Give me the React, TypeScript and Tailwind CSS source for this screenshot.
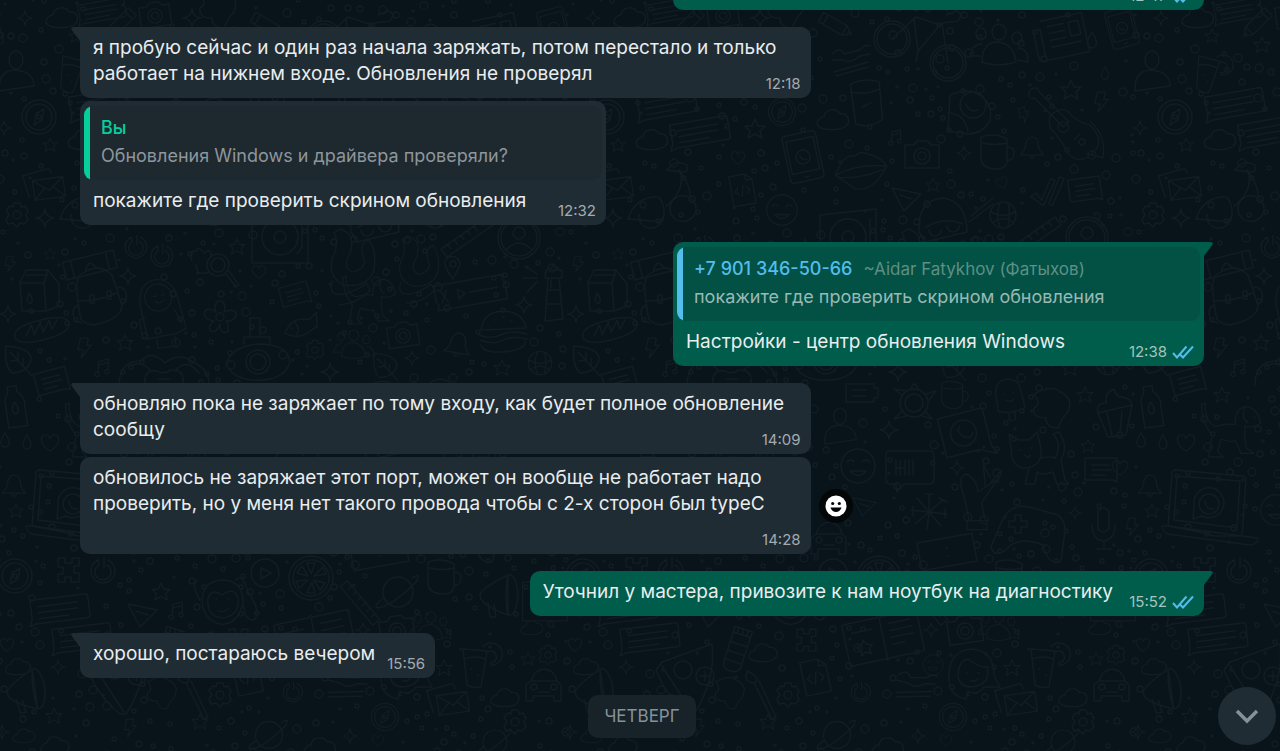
import type { ReactNode } from "react";
import clsx from "clsx";

type Doodle = [kind: string, x: number, y: number, scale?: number, rotate?: number];

const TILE = 568;

/* Shapes are drawn around 0,0 and placed by the doodles list below */
const shapes: Record<string, ReactNode> = {
  star: <path d="M0-10 3-3 10-3 5 2 7 9 0 5-7 9-5 2-10-3-3-3Z" />,
  spark: <path d="M0-9Q1-1 9 0Q1 1 0 9Q-1 1-9 0Q-1-1 0-9Z" />,
  heart: <path d="M0 9C-14 0-10-9-5-9C-2-9 0-6 0-5C0-6 2-9 5-9C10-9 14 0 0 9Z" />,
  bolt: <path d="M-4-11H5L3-3H8L-3 11-1 2H-7Z" />,
  drop: <path d="M0-8Q9 6 0 8Q-9 6 0-8Z" />,
  music: <path d="M-4 6V-6L7-9V3M-4-2 7-5M-7 6a2.500 2.500 0 1 0 3 0ZM4 3a2.500 2.500 0 1 0 3 0Z" />,
  cloud: <path d="M-12 8C-20 5-14-3-9-3C-8-12 4-12 7-6C15-8 18 2 13 6C8 11-8 10-12 8Z" />,
  bell: <path d="M-13 9Q-7 4-7-4Q-5-11 0-11Q6-11 7-4Q7 4 13 9ZM-3 10Q0 15 3 10" />,
  flower: (
    <>
      <circle r="4" />
      <path d="M-4-5C-9-20 9-20 4-5C18-12 22 4 6 4C14 18-1 20 0 7C-3 20-18 14-6 4C-22 2-16-14-4-5Z" />
    </>
  ),
  gear: (
    <>
      <circle r="4" />
      <path d="M-3-12H3L4-8 8-9 11-4 9 0 11 5 7 9 3 8 0 12-4 8-9 9-11 4-8 0-11-5-7-9-4-8Z" />
    </>
  ),
  compass: (
    <>
      <circle r="17" />
      <circle r="13" />
      <path d="M5-8 3 3-5 8-3-3Z" />
      <circle r="2" />
    </>
  ),
  globe: <path d="M-13 0a13 13 0 1 0 26 0a13 13 0 1 0-26 0ZM-12-3Q0 4 12-3M-3-12Q-8 0-3 12M5-12Q8 0 5 12M-10 7Q0 0 10 7" />,
  play: <path d="M-14 0a14 14 0 1 0 28 0a14 14 0 1 0-28 0ZM-4-5 6 0-4 6Z" />,
  emoji: <path d="M-17 0a17 17 0 1 0 34 0a17 17 0 1 0-34 0ZM-11-4Q-7-8-4-4M4-4Q8-8 11-4M-8 5Q0 14 8 5Z" />,
  citrus: <path d="M-22 0a22 22 0 1 0 44 0a22 22 0 1 0-44 0ZM-18 0a18 18 0 1 0 36 0a18 18 0 1 0-36 0ZM3-2 12-11 15-4ZM3 2 14 5 9 12ZM1 4 4 15-4 15ZM-3 2-12 10-15 3ZM-3-2-14-5-9-12ZM0-4-4-15H4Z" />,
  bike: <path d="M-46 0a18 18 0 1 0 36 0a18 18 0 1 0-36 0ZM-43 0a15 15 0 1 0 30 0a15 15 0 1 0-30 0ZM10 24a18 18 0 1 0 36 0a18 18 0 1 0-36 0ZM13 24a15 15 0 1 0 30 0a15 15 0 1 0-30 0ZM-28 0-4-22 20-14-2 12-6-20M28 24 22-16 38-18Q44-26 36-28L26-24M-2 12-4 22" />,
  people: <path d="M-16 12Q-16-8 0-8Q16-6 18 12Q0 18-16 12ZM-6-18a7 8 0 1 0 14 0a7 8 0 1 0-14 0ZM-22-16a5 6 0 1 0 10 0a5 6 0 1 0-10 0ZM14-12a5 6 0 1 0 10 0a5 6 0 1 0-10 0ZM-18 6-28 6Q-26-6-16-6M20 10 30 12Q30-2 20-2" />,
  person: <path d="M-17 19Q-18-2 0-2Q18 0 18 14ZM-7-12a7 9 0 1 0 14 0a7 9 0 1 0-14 0Z" />,
  news: <path d="M-18-20H24V20H-22Q-27 20-27 15V-12H-20V15M-12-13H4M-12-6H4M-12 1H4M-12 8H18M9-13H19V1H9Z" />,
  phone: <path d="M-13-24H13Q17-24 17-20V20Q17 24 13 24H-13Q-17 24-17 20V-20Q-17-24-13-24ZM-14-18H14V15H-14ZM-7 0a7 7 0 1 0 14 0a7 7 0 1 0-14 0ZM-3-2Q-2 3 3 3M-2 20H2" />,
  file: <path d="M-12-17H6L13-10V17H-12ZM6-17V-10H13M-4-3-8 1-4 5M5-3 9 1 5 5M2-5-1 7" />,
  drink: <path d="M-12-16 12-14 6 22Q0 24-8 20ZM-11-6Q0-10 11-6M-4 4h1M2 10h1M8-18a11 11 0 1 1 7 18M11-12a6 6 0 1 1 4 10" />,
  pencil: <path d="M-6-18H6V12L0 21-6 12ZM-6-12H6M-6 12H6M-2 17H2" />,
  banner: <path d="M-29-11H26Q29-11 29-8V10Q29 13 26 13H-26L-32 15-29 8ZM-22-4H18M-22 2H18M-22 8H8" />,
  card: <path d="M-16-12H16V12L12 10H-16ZM-9-5H9M-9 0H10M-9 5H4" />,
  guitar: <path d="M-42-40Q-34-48-30-38L2-6-4 0-36-32Q-44-30-42-40ZM-10-18Q-24-14-18 2Q-6 14 0 28Q12 44 30 28Q42 14 26-2Q10-6 2-16Q-4-22-10-18ZM-10 0a6 6 0 1 0 12 0a6 6 0 1 0-12 0ZM8 14 14 8M26-6Q44 10 40 34L22 30" />,
  chat: <path d="M-20-18Q-6-24 4-21Q24-12 20 8Q10 24-8 20L-22 18ZM-10-8a13 13 0 1 0 26 0a13 13 0 1 0-26 0ZM-4-9Q0 0 8-3M-22 0Q-6 0-2 18" />,
  mug: <path d="M-14-15Q0-20 12-13V10Q10 17 2 17Q-12 17-14 8ZM-12-9Q0-6 12-9M12-5Q20-5 19 2Q18 9 12 8" />,
  camera: <path d="M-17-10H-8L-5-14H6L9-10H17V13H-17ZM-8 1a8 8 0 1 0 16 0a8 8 0 1 0-16 0ZM-4 1a4 4 0 1 0 8 0a4 4 0 1 0-8 0Z" />,
  envelope: <path d="M-14-9H20V13H-14ZM-14-9 3 4 20-9M-14 13-2 1M20 13 8 1M-20 9-24-16 6-20 8-14" />,
  ticks: <path d="M-18 4-12 0-6 8 4-16 9-14-4 14ZM2 12 14-18 19-16 6 14Z" />,
  helmet: <path d="M-24 10Q-26-22 0-24Q24-20 24 10L-18 20ZM-18 6Q0-6 20 2M-14 8a6 6 0 1 0 12 0M4 4a6 6 0 1 0 12 0M28-6 50-24M26 0 50-18" />,
  cherry: <path d="M-34 24Q-30 0-6-2Q4 10 0 22ZM-24 18a12 12 0 1 0 24 0M6 6a13 13 0 1 0 26 0a13 13 0 1 0-26 0ZM10-32Q20-14 2 6M10-32Q24-16 24-8M-2-30Q4-42 16-38Q22-30 10-30Z" />,
  lips: <path d="M-28 2Q-14-22-4-16Q4-22 12-16Q26-10 30 0Q12 26-8 20ZM-28 2Q0-8 30 0M-24 5Q0 10 26 3" />,
  jar: <path d="M-15-20Q0-26 14-20V18Q0 26-13 20ZM-15-12Q0-8 14-13M-6 4 4 0" />,
  cutlery: <path d="M-18-4Q-10-12-6-4L10-8Q14-14 20-12M-18 2-6 2Q0 6 10-2L20-4M-16 14 18 4M-14 18 18 9" />,
  record: <path d="M-28-22 28-28V26H-28ZM-18 0a18 18 0 1 0 36 0a18 18 0 1 0-36 0ZM-6 0a6 6 0 1 0 12 0a6 6 0 1 0-12 0ZM22-18V10L17 17" />,
  milk: <path d="M-18-8-12-20H10L21-6V16L8 21H-16ZM-18-7H6L10-20M6-7 8 21M-12-15H10M-9 3Q-3 13-8 13Q-13 12-9 3Z" />,
  backpack: <path d="M-20 20Q-26-14-20-20Q-2-34 12-20L22 10Q22 24-6 30Q-20 28-20 20ZM-22 6Q0 6 16-2M-10 0H-6V8H-10ZM7-4H11V4H7ZM-22 10Q-30 14-25 26L-18 28M18-8Q28-8 26 6L22 10" />,
  tube: <path d="M-26-9H26V9H-26ZM-18-9V9M18-9V9M-6 5Q0-8 6 5" />,
  astro: <path d="M-18 30-21-8Q-20-34 0-34Q20-32 22-6L26 24 16 28ZM-15-14a15 15 0 1 0 30 0a15 15 0 1 0-30 0ZM-5-16h3M4-16h3M-4-10Q0-6 5-10M-18 6-24 8V28H-18M16 2 22 18M-8 32V42H12V30" />,
  magnifier: <path d="M-11 0a11 11 0 1 0 22 0a11 11 0 1 0-22 0ZM-7 0a7 7 0 1 0 14 0a7 7 0 1 0-14 0ZM8 9 18 22 21 20 11 6M-26-4Q-30-14-22-14Q-20-20-14-12Q-6-18-7-8M-22 0-20 8-10 8" />,
  submarine: <path d="M-32 2Q-26-16 0-18Q30-18 32 0Q26 20-6 18Q-26 16-32 2ZM-12 0a12 12 0 1 0 24 0a12 12 0 1 0-24 0ZM-8 0a8 8 0 1 0 16 0a8 8 0 1 0-16 0ZM-14-18V-25H12V-18M-8-25V-44H2V-25" />,
  bread: <path d="M-28 4Q-28-6 0-10Q26-14 28-4Q26 6 0 10Q-26 14-28 4ZM-16 4-10-6-8 4-1-8 1 2 8-9 10 0 16-9" />,
  leaf: <path d="M-12-14Q14-12 13 0Q10 12-6 13Q-14 6-12-14ZM-8-8 14 16M0 0V-7M0 0-7 1M5 6V-2" />,
  bottle: <path d="M-5-21H4V-15Q10-10 10-4V20H-9V-4Q-10-10-5-15ZM0-5Q6 5 0 7Q-6 5 0-5Z" />,
  bear: <path d="M-44 18Q-44-6-22-6Q-12-18 2-4Q16-16 32-4Q48 4 46 22M-18 18Q-20 2-6 4Q0 8 8 3Q22 2 20 18ZM-4 12H6M-34 0Q-22-8-12 4M12 4Q24-10 36 6" />,
  ticket: <path d="M-35-12H36Q32-8 36-4V13H-35Q-31 9-35 4ZM-29-6 -23 6M-29 6-23-6M-12-5-5 0-12 5ZM0 0H28" />,
  fish: <path d="M-16 4Q-6-12 10-6L18-12 17 2 12 4Q-2 14-16 4ZM-9 0h1M-4-5Q0 2-4 7" />,
  snake: <path d="M-6-40Q12-36 6-14Q-4 2 8 8Q20 6 22-4Q14-24 26-28Q36-16 32 6Q24 26-2 22Q-20 12-14-8Q-6-22-12-36ZM-14 18Q-20 36 0 32Q14 28 24 20L28 28Q12 44-6 44" />,
  puppy: <path d="M-30-30Q-30-8-18-4Q-4-8 4-6Q2-22 14-26Q28-26 32-8Q26-2 14-4Q14 10 16 20L24 26H10L4 12Q-4 14-12 10L-16 24-10 30H-26L-22 6Q-34-8-34-28ZM14-26Q10-12 18-8M25-14h1" />,
  burger: <path d="M-22-2Q-20-20 0-21Q20-20 23-4ZM-24 3Q-12 8 0 2Q10-2 24 2M-23 8Q-8 14 2 7Q12 4 24 7M-22 13Q-20 21 0 20Q22 18 22 10M-8-12h1M0-15h1M8-11h1" />,
  tower: <path d="M-8 27-5-16H6L10 25ZM-8-16H9V-24H-7ZM-4-24Q1-32 6-24M-6-4H7M-7 10H9M-2-14V-6M-16-20-28-28M-16-16H-30M-16-12-26-2" />,
  user: <path d="M-21 0a21 21 0 1 0 42 0a21 21 0 1 0-42 0ZM-18 0a18 18 0 1 0 36 0a18 18 0 1 0-36 0ZM-6-5a6 6 0 1 0 12 0a6 6 0 1 0-12 0ZM-13 12Q0-2 13 12" />,
  pin: <path d="M0 12Q-10-2-8-6Q-4-12 2-10Q9-6 6 0ZM-3-3a3 3 0 1 0 6 0a3 3 0 1 0-6 0Z" />,
  ruler: <path d="M-28-5H28V5H-28ZM-20-5V0M-12-5V0M-4-5V0M4-5V0M12-5V0M20-5V0" />,
  battery: <path d="M-16-9H12V-5H16V5H12V9H-16ZM-10-3H4M-10 3H4" />,
  turtle: <path d="M-14 0a14 14 0 1 0 28 0a14 14 0 1 0-28 0ZM-9 0a9 9 0 1 0 18 0a9 9 0 1 0-18 0ZM-3-14Q0-24 4-14M12-9 22-12 15-3M12 9 18 16 8 13M-12 8-20 16-8 13M-12-8-20-14-8-12" />,
  icecream: <path d="M-14 14V-8Q-12-20 0-20Q14-18 14-6L16 14Q0 20-14 14ZM-3 17V26H4V17M-5-4h1M5-4h1M-4 3Q0 7 5 3" />,
  blob: <path d="M-18-14Q0-24 8-16Q22-10 16 4Q10 10 6 20Q-6 20-6 10Q-20 10-18 0Q-10-4-18-14Z" />,
  cupcake: <path d="M-16 0 18-8 12 22-6 24ZM-16 0Q-18-10-8-10Q-10-20 0-24Q2-16 8-16Q18-14 18-8M-7 0-2 22M8-2 6 20" />,
  wabubble: <path d="M-22-22H24V16L28 26 12 18H-22ZM-13-2a13 13 0 1 0 26 0a13 13 0 1 0-26 0ZM-5-6Q-2 5 7 3M-5-6-2-9M7 3 9 0" />,
  hibubble: <path d="M-20-17H20Q24-17 24-13V11Q24 16 19 16H-6L-13 24-14 16H-20Q-24 16-24 11V-13Q-24-17-20-17ZM-14-8V7M-10-8V7M-14 0H-5M-5-8V7M-1-8V7M3-8V7" />,
  clock: <path d="M-28-14H28V14H-28ZM0-4h1M0 4h1" />,
  cat: <path d="M-22-12-24-26-14-20H-4L4-28 8-12Q10 6-8 8Q-22 8-22-12ZM-13-10h1M-2-12h1M-8-5Q-6 0-3-5M8-2Q18-4 22-2Q30-14 20-26L26-28Q36-14 28 0L32 20 36 24H24L20 12Q8 16 4 12L2 24H-8L-4 8" />,
  laptop: <path d="M-32-38 34-32Q38-32 38-28L34 28-40 18-36-34Q-36-38-32-38ZM-31-32 32-27 29 20-34 12ZM-46 18-40 18-8 24 6 28 34 28 50 30Q50 36 42 37L-40 26Q-46 24-46 18ZM-14-4a15 15 0 1 1 8 12L-15 11ZM-9-4a10 10 0 1 0 20 0a10 10 0 1 0-20 0ZM-3-7Q-2 2 5 1" />,
  hand: <path d="M-10 34Q-14 10-18 0Q-22-14-14-18Q-2-14 0 2L22-12 4 14 8 34ZM-12 34H10V44H-12ZM8-4 6-28 14-14M14-8 26-22 22-8" />,
  dandelion: <path d="M0 0 0-18M0 0 14-12M0 0 18 2M0 0 12 14M0 0-2 18M0 0-14 12M0 0-18-2M0 0-12-14M-4-18H4M10-14 18-10M16-3V6M-16-6V4" />,
  gamepad: <path d="M-28-4Q-20-24 0-20L22-14Q36-12 36 4L32 34Q20 40 14 18Q-6 10-18 18Q-34 34-38 20ZM-14-12H-8V-6H-2V0H-8V6H-14V0H-20V-6H-14ZM14-4a2 2 0 1 0 4 0a2 2 0 1 0-4 0ZM22 0a2 2 0 1 0 4 0a2 2 0 1 0-4 0ZM12 6a4 4 0 1 0 8 0a4 4 0 1 0-8 0Z" />,
  mic: <path d="M-5-16Q0-22 6-16V2Q0 8-5 2ZM-11-2Q-10 14 1 14Q12 12 12-2M1 14V22M-6 22H8" />,
  car: <path d="M-17 14V-2L-12-6Q-8-18 2-18Q12-16 14-6L18-2V14H11V9H-10V14ZM-12-6H14M-12 0a3 3 0 1 0 6 0a3 3 0 1 0-6 0ZM8 0a3 3 0 1 0 6 0a3 3 0 1 0-6 0ZM-4 5H6" />,
  puzzle: <path d="M-10-12H-3V-7H4V-12H11V-4H6V3H11V12H3V7H-3V12H-10V4H-5V-3H-10Z" />,
  refresh: <path d="M-4-12A12 12 0 1 0 6-12M-3-7A8 8 0 1 0 5-7M-4-12-3-7M2-14V-4" />,
  hat: <path d="M-14-9 15-3-2 14ZM-6-2 6 2" />,
  monkey: <path d="M-20 0Q-20-22 2-22Q22-20 21 2Q14 24-2 22Q-18 18-20 0ZM-14-4Q-10-14 0-7Q12-16 16-4Q18 14 0 16Q-16 14-14-4ZM-6-3h1M6-3h1M-4 8Q0 12 6 7M-22-2Q-32-18-24-22M14-22Q20-30 26-10Q40 10 32 18Q22 18 22 4" />,
  brush: <path d="M-10-22Q-16-12-4-10Q4-14-10-22ZM-4-10 14 26 18 24 1-12" />,
  planet: <path d="M-15 0a15 15 0 1 0 30 0a15 15 0 1 0-30 0ZM-14 6Q-26 14-20 16Q-6 14 18-10Q24-20 14-14" />,
  book: <path d="M-38-20H-2Q0-24 2-20H38V22H2Q0 25-2 22H-38ZM0-20V22M8-12H30M8-5H30M8 2H30M8 9H20M-30-10H-10M-20-1-17 4-12 5-16 9-15 14-20 11-25 14-24 9-28 5-23 4Z" />,
  girl: <path d="M-22 14Q-28-22 0-24Q22-22 22 2L28 14H12Q4 24-4 18L-6 26Q-18 24-22 14ZM-14 4Q-14-12-4-14Q10-4 16-6Q18 12 0 14Q-12 14-14 4ZM-5 0h1M6 0h1M-2 7Q2 10 6 6" />,
  megaphone: <path d="M-20 0Q-20-6 8-20V20Q-20 10-20 0ZM8-20Q16-22 18 0Q16 22 8 20Q4 0 8-20ZM-12 8-10 22-4 22-6 10" />,
  pizza: <path d="M-32-10-26-18 24-36Q28 0 6 34L0 34Q-22 16-32-10ZM-26-14Q-8 14 4 32M-14-10a9 9 0 1 0 18 0a9 9 0 1 0-18 0ZM8-4a9 9 0 1 0 18 0a9 9 0 1 0-18 0ZM17-9V1M12-4H22" />,
  squid: <path d="M-9-22H9V14Q9 22 0 22Q-9 22-9 14ZM-9-16H9M-9-6H9M-9 3H9M-9 12H9M-5-22V-16M0-22V-16M5-22V-16" />,
};

const doodles: Doodle[] = [
  ["bike", 352, 39], ["people", 430, 50], ["news", 494, 37, 1, -12], ["phone", 554, 28, 0.8, -15], ["person", 16, 72],
  ["drink", 71, 72, 0.9, 10], ["pencil", 121, 23, 0.9, 45], ["compass", 39, 117], ["banner", 99, 103, 1, -10], ["banner", 132, 131, 1, -10],
  ["cloud", 84, 140], ["guitar", 499, 127, 0.9], ["chat", 402, 113], ["mug", 427, 152], ["camera", 354, 155], ["bell", 464, 147, 0.9],
  ["envelope", 46, 187, 0.9, -8], ["card", 517, 190, 1, -8], ["ticks", 479, 193, 0.9], ["gear", 17, 215], ["globe", 435, 215],
  ["helmet", 375, 222], ["user", 519, 238], ["cherry", 97, 200, 1, 8], ["phone", 235, 157, 1, -12], ["lips", 292, 170, 0.9, -8],
  ["jar", 299, 103, 1, -5], ["file", 174, 190, 0.9, -10], ["emoji", 214, 210, 0.9], ["cloud", 265, 120], ["compass", 214, 112, 0.8],
  ["cutlery", 282, 58], ["pencil", 267, 25, 0.9, -60], ["record", 280, 237], ["star", 187, 129], ["star", 50, 145, 0.7], ["star", 503, 90],
  ["star", 76, 36, 0.7], ["star", 126, 45, 0.8], ["spark", 192, 18], ["spark", 4, 128, 0.8], ["spark", 396, 153, 0.8], ["spark", 25, 18, 0.8],
  ["cloud", 62, 18], ["bolt", 533, 102, 0.9], ["bolt", 456, 115, 0.7, -20], ["drop", 524, 40], ["drop", 537, 73, 0.8], ["heart", 170, 158, 0.7],
  ["spark", 45, 218], ["star", 365, 185, 0.7], ["heart", 434, 183, 0.6, -20], ["hat", 338, 197], ["music", 327, 137, 0.8],
  ["camera", 155, 15, 0.9, -8], ["banner", 102, 10, 0.8, -10], ["blob", 218, 8],
  ["milk", 38, 290], ["backpack", 100, 295], ["tube", 90, 265, 1, -14], ["astro", 160, 310, 0.9, -8], ["magnifier", 218, 265],
  ["flower", 220, 317], ["star", 237, 247, 0.8], ["submarine", 258, 362], ["bread", 42, 330, 1, -5], ["leaf", 18, 360], ["card", 52, 382, 1, -15],
  ["bottle", 15, 407, 1, -8], ["heart", 50, 443, 0.9], ["drop", 5, 440, 0.9], ["drop", 27, 442, 0.9], ["bear", 163, 367], ["music", 102, 367, 0.9],
  ["bolt", 84, 348, 0.9], ["star", 125, 343, 0.8], ["card", 295, 295, 0.9, -15], ["fish", 300, 327, 1, -8], ["snake", 345, 265, 0.9],
  ["puppy", 370, 300, 0.8], ["people", 353, 348, 0.7], ["gear", 315, 350, 0.8], ["ticket", 470, 292, 1, -10], ["burger", 503, 332],
  ["tower", 553, 294], ["bell", 458, 344, 1, 10], ["camera", 403, 335, 0.9, -8], ["pin", 453, 267], ["globe", 540, 363, 0.9],
  ["ruler", 467, 237, 1, -35], ["star", 502, 368, 0.8], ["snake", 412, 268, 0.8], ["spark", 128, 276, 0.9], ["spark", 8, 314, 0.9],
  ["spark", 524, 305, 0.9], ["spark", 412, 358, 0.8], ["heart", 259, 272, 0.7], ["bolt", 10, 264, 0.7], ["star", 50, 254, 0.6],
  ["leaf", 385, 366, 0.9], ["spark", 330, 372, 1], ["refresh", 135, 248, 0.9], ["refresh", 161, 257, 0.9],
  ["battery", 294, 393], ["turtle", 346, 403], ["mug", 385, 395, 0.8], ["icecream", 441, 397, 0.9, -8], ["blob", 484, 408],
  ["cupcake", 546, 413], ["puppy", 96, 430, 0.9], ["person", 272, 427, 0.9], ["wabubble", 396, 435, 1, -14], ["emoji", 290, 466],
  ["hibubble", 342, 468], ["cat", 465, 460], ["card", 533, 470], ["bell", 14, 485, 0.9], ["laptop", 72, 508], ["hand", 410, 490, 0.9],
  ["dandelion", 361, 512], ["gamepad", 461, 527], ["mic", 535, 527], ["car", 260, 540], ["clock", 379, 552, 1, -10], ["spark", 321, 430],
  ["spark", 389, 468, 0.8], ["star", 517, 395, 0.8], ["star", 86, 395, 0.8], ["heart", 552, 468, 0.8], ["star", 520, 446, 0.7],
  ["bolt", 564, 527, 0.8], ["star", 16, 511, 0.7], ["spark", 507, 513, 0.7], ["hat", 296, 505, 0.8], ["emoji", 140, 510, 0.9],
  ["citrus", 170, 455], ["cloud", 215, 480],
  ["compass", 15, 576], ["puzzle", 68, 570], ["refresh", 102, 572], ["banner", 60, 608, 1, -7], ["banner", 82, 637, 1, -7], ["hat", 142, 613],
  ["monkey", 222, 602], ["play", 265, 573], ["citrus", 311, 578], ["ruler", 360, 603, 0.9, 50], ["planet", 398, 592], ["mug", 442, 577],
  ["book", 315, 637, 1, -12], ["camera", 397, 630, 1, -8], ["girl", 404, 673], ["megaphone", 27, 690, 1, -8], ["cloud", 18, 667, 0.8],
  ["pizza", 120, 680], ["squid", 169, 650, 1, 18], ["cloud", 195, 653, 0.9], ["brush", 190, 693], ["blob", 162, 693, 0.8], ["gear", 220, 695],
  ["car", 543, 687], ["gear", 548, 655, 0.8], ["gear", 515, 722], ["emoji", 365, 665, 0.6], ["cutlery", 347, 683, 1, 15], ["refresh", 292, 693, 0.8],
  ["compass", 385, 717, 0.8], ["planet", 269, 735, 0.9], ["file", 247, 677, 1, -12], ["envelope", 450, 702, 0.9, -8], ["cloud", 505, 698, 0.9],
  ["drink", 475, 665], ["star", 444, 668, 0.8], ["star", 161, 592, 0.9], ["music", 176, 610, 0.9], ["spark", 58, 667, 0.8], ["heart", 7, 645, 0.7],
  ["star", 54, 716, 0.8], ["cloud", 24, 736, 0.7], ["bolt", 130, 728, 0.8], ["star", 200, 722, 0.8], ["spark", 350, 736, 0.8], ["spark", 2, 732, 0.8],
  ["cloud", 55, 746, 0.9], ["star", 528, 659, 0.7], ["cloud", 320, 748], ["heart", 378, 741, 0.6], ["spark", 363, 630, 0.8], ["megaphone", 500, 595],
  ["record", 545, 600, 0.8], ["planet", 495, 742, 0.8], ["cloud", 532, 628, 0.7], ["puzzle", 238, 640, 0.9], ["people", 430, 630, 0.7],
];

// Loose dots and rings that fill the space between the drawings
const dots = (() => {
  const out: { x: number; y: number; r: number }[] = [];
  let seed = 17;
  const next = () => {
    seed = (seed * 16807) % 2147483647;
    return seed / 2147483647;
  };
  for (let i = 0; i < 2500; i++) {
    const x = Math.round(next() * TILE);
    const y = Math.round(next() * 760);
    const r = [1, 2, 2, 3, 4][Math.floor(next() * 5)];
    const free =
      doodles.every(([, dx, dy, s = 1]) => Math.hypot(dx - x, dy - y) > 19 * s + r) &&
      out.every((d) => Math.hypot(d.x - x, d.y - y) > d.r + r + 5);
    if (free) out.push({ x, y, r });
  }
  return out;
})();

function Wallpaper() {
  return (
    <svg aria-hidden="true" className="absolute inset-0 w-full h-full" fill="none" stroke="#121d23" strokeWidth="1.5" strokeLinejoin="round" strokeLinecap="round">
      <defs>
        <g id="doodles">
          {doodles.map(([kind, x, y, s = 1, r = 0], i) => (
            <g key={i} transform={`translate(${x} ${y}) rotate(${r}) scale(${s})`}>
              {shapes[kind]}
            </g>
          ))}
          {dots.map((d, i) => (
            <circle key={i} cx={d.x} cy={d.y} r={d.r} />
          ))}
        </g>
      </defs>
      {[-1, 0, 1, 2, 3].map((n) => (
        <use key={n} href="#doodles" x={n * TILE} />
      ))}
    </svg>
  );
}

function Ticks() {
  return (
    <svg viewBox="0 0 22 14" className="w-[22px] h-[14px]" fill="none" stroke="#53bdeb" strokeWidth="2" role="img" aria-label="Прочитано">
      <path d="M1 8 5 12.500 14.500 1.500M8.500 10 11 12.500 21 1.500" />
    </svg>
  );
}

function Tail({ out }: { out?: boolean }) {
  return (
    <svg
      viewBox="0 1 8 12"
      aria-hidden="true"
      className={clsx("absolute top-0 w-[10px] h-[15px]", out ? "-right-[10px] text-[#005c4b] -scale-x-100" : "-left-[10px] text-[#202c33]")}
    >
      <path fill="currentColor" d="M1.533 3.568 8 12.193V1H2.812C1.042 1 .474 2.156 1.533 3.568z" />
    </svg>
  );
}

interface BubbleProps {
  time: string;
  out?: boolean;
  tail?: boolean;
  /** Fixed width for messages that carry a quote, otherwise the text decides */
  wide?: boolean;
  quote?: ReactNode;
  children?: ReactNode;
}

function Bubble({ time, out, tail, wide, quote, children }: BubbleProps) {
  return (
    <div
      className={clsx(
        "relative max-w-[65%] rounded-[10px] text-[19px] leading-[26px] text-[#e9edef]",
        wide ? (out ? "w-[531px]" : "w-[526px]") : "w-fit",
        out ? "self-end bg-[#005c4b]" : "bg-[#202c33]",
        tail && (out ? "rounded-tr-none" : "rounded-tl-none")
      )}
    >
      {tail && <Tail out={out} />}
      {quote && <div className="px-1 pt-[5px]">{quote}</div>}
      <div className="px-[13px] pt-2 pb-[11px]">
        {children}
        <span className={clsx("inline-block h-2", out ? "w-[78px]" : "w-[47px]")} />
      </div>
      <div className="absolute right-[10px] bottom-1 flex items-center gap-[5px] text-[15px] leading-5 text-[#a3abb0]">
        <time className={out ? "text-[#a5c4bd]" : ""}>{time}</time>
        {out && <Ticks />}
      </div>
    </div>
  );
}

interface QuoteProps {
  name: string;
  alias?: string;
  text: string;
  out?: boolean;
}

function Quote({ name, alias, text, out }: QuoteProps) {
  return (
    <blockquote
      className={clsx(
        "flex overflow-hidden rounded-[9px] text-[18px] leading-7",
        out ? "bg-[#025144]" : "bg-[#1d282f]"
      )}
    >
      <span className={clsx("w-[6px] shrink-0", out ? "bg-[#53bdeb]" : "bg-[#06cf9c]")} />
      <div className="min-w-0 px-[11px] pt-2 pb-[10px]">
        <p>
          <span className={clsx("font-medium", out ? "text-[#53bdeb]" : "text-[#06cf9c]")}>{name}</span>
          {alias && <span className="ml-[11px] text-[17px] text-[#5e8f85]">{alias}</span>}
        </p>
        <p className={out ? "text-[#9ab9b4]" : "text-[#8e969b]"}>{text}</p>
      </div>
    </blockquote>
  );
}

export default function App() {
  return (
    <main className="relative h-screen overflow-hidden bg-[#09141a] font-['Inter','Liberation_Sans',sans-serif]">
      <Wallpaper />
      <div className="relative h-full flex flex-col justify-end pl-20 pr-[76px] pb-[13px]">
        <Bubble time="12:47" out wide />

        <div className="mt-[17px] flex flex-col gap-[3px]">
          <Bubble time="12:18" tail>
            я пробую сейчас и один раз начала заряжать, потом перестало и только работает на нижнем входе. Обновления не проверял
          </Bubble>
          <Bubble time="12:32" wide quote={<Quote name="Вы" text="Обновления Windows и драйвера проверяли?" />}>
            покажите где проверить скрином обновления
          </Bubble>
        </div>

        <div className="mt-[17px] flex flex-col">
          <Bubble
            time="12:38"
            out
            tail
            wide
            quote={<Quote out name="+7 901 346-50-66" alias="~Aidar Fatykhov (Фатыхов)" text="покажите где проверить скрином обновления" />}
          >
            Настройки - центр обновления Windows
          </Bubble>
        </div>

        <div className="mt-[17px] flex flex-col gap-[3px]">
          <Bubble time="14:09" tail>
            обновляю пока не заряжает по тому входу, как будет полное обновление сообщу
          </Bubble>
          <div className="flex items-center gap-2">
            <Bubble time="14:28">
              обновилось не заряжает этот порт, может он вообще не работает надо проверить, но у меня нет такого провода чтобы с 2-х сторон был typeC
            </Bubble>
            <button aria-label="Добавить реакцию" className="flex items-center justify-center w-[34px] h-[34px] rounded-full bg-[#040708]">
              <svg viewBox="0 0 22 22" className="w-[22px] h-[22px]">
                <circle cx="11" cy="11" r="10.500" fill="#fff" />
                <circle cx="7.700" cy="8.500" r="1.600" fill="#040708" />
                <circle cx="14.300" cy="8.500" r="1.600" fill="#040708" />
                <path d="M5.500 12.500H16.500Q15 17 11 17T5.500 12.500Z" fill="#040708" />
              </svg>
            </button>
          </div>
        </div>

        <div className="mt-[17px] flex flex-col">
          <Bubble time="15:52" out tail>
            Уточнил у мастера, привозите к нам ноутбук на диагностику
          </Bubble>
        </div>

        <div className="mt-[17px] flex flex-col">
          <Bubble time="15:56" tail>
            хорошо, постараюсь вечером
          </Bubble>
        </div>

        <div className="mt-[17px] self-center rounded-[10px] bg-[#182229] px-4 py-2 text-[17px] leading-[27px] text-[#85929a]">
          ЧЕТВЕРГ
        </div>
      </div>

      <button aria-label="Вниз" className="absolute right-1 bottom-[6px] flex items-center justify-center w-[58px] h-[58px] rounded-full bg-[#202c33]">
        <svg viewBox="0 0 24 16" className="w-6 h-4" fill="none" stroke="#85929a" strokeWidth="3.500">
          <path d="M2 3 12 13 22 3" />
        </svg>
      </button>
    </main>
  );
}
